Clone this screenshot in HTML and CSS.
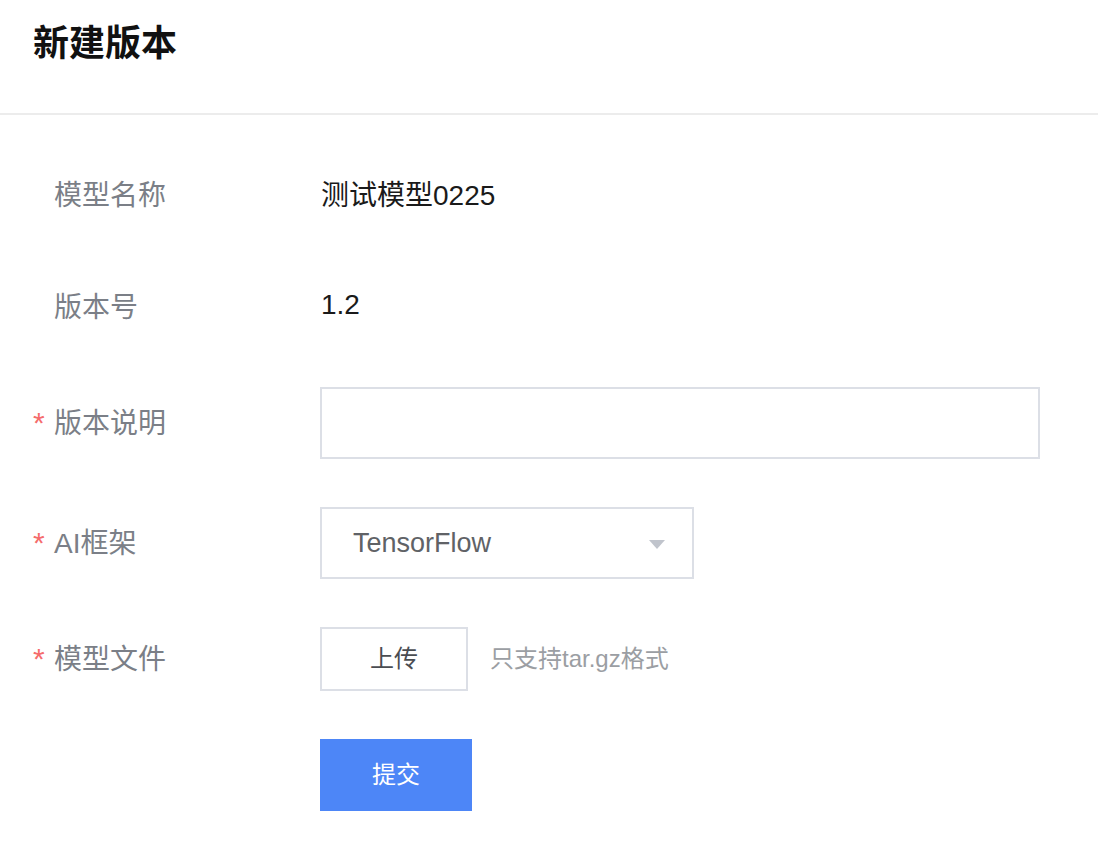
FILE: index.html
```html
<!DOCTYPE html>
<html lang="zh-CN">
<head>
<meta charset="utf-8">
<title>新建版本</title>
<link rel="stylesheet" href="styles.css">
</head>
<body>
<header class="page-header">
  <h1 class="page-title">新建版本</h1>
</header>
<form class="form">
  <div class="row row-text">
    <div class="label">模型名称</div>
    <div class="value">测试模型0225</div>
  </div>
  <div class="row row-text">
    <div class="label">版本号</div>
    <div class="value">1.2</div>
  </div>
  <div class="row">
    <div class="label required"><span class="star">*</span>版本说明</div>
    <div class="field"><div class="input"></div></div>
  </div>
  <div class="row">
    <div class="label required"><span class="star">*</span>AI框架</div>
    <div class="field">
      <div class="select">
        <span class="select-text">TensorFlow</span>
        <span class="arrow"></span>
      </div>
    </div>
  </div>
  <div class="row row-upload">
    <div class="label required"><span class="star">*</span>模型文件</div>
    <div class="field upload-field">
      <div class="btn-upload">上传</div>
      <span class="hint">只支持tar.gz格式</span>
    </div>
  </div>
  <div class="row row-submit">
    <div class="label"></div>
    <div class="field"><div class="btn-submit">提交</div></div>
  </div>
</form>
</body>
</html>
```
FILE: styles.css
```css
* { box-sizing: border-box; }
body {
  margin: 0;
  background: #fff;
  font-family: "Liberation Sans", "Noto Sans CJK SC", sans-serif;
  width: 1098px;
}
.page-header {
  height: 115px;
  border-bottom: 2px solid #ececec;
  padding: 21px 0 0 33px;
}
.page-title {
  margin: 0;
  font-size: 36px;
  line-height: 46px;
  font-weight: bold;
  color: #111;
}
.form {
  padding: 48px 0 0 33px;
  display: flex;
  flex-direction: column;
  gap: 48px;
}
.row {
  display: flex;
  align-items: center;
  height: 72px;
}
.row-text { height: 64px; }
.row-upload { height: 64px; }
.row-submit { height: 72px; }
.label {
  width: 287px;
  flex: none;
  padding-left: 21px;
  padding-bottom: 5px;
  font-size: 28px;
  color: #7b7f87;
  display: flex;
  align-items: center;
}
.label.required { padding-left: 0; }
.star {
  color: #f56c6c;
  width: 21px;
  font-size: 30px;
  line-height: 1;
  padding-top: 4px;
}
.value {
  font-size: 28px;
  color: #1a1a1a;
  padding-left: 1px;
  padding-bottom: 4px;
}
.field { display: flex; align-items: center; height: 100%; }
.input {
  width: 720px;
  height: 72px;
  border: 2px solid #dcdfe6;
  background: #fff;
}
.select {
  width: 374px;
  height: 72px;
  border: 2px solid #dcdfe6;
  display: flex;
  align-items: center;
  justify-content: space-between;
  padding: 0 27px 0 31px;
}
.select-text {
  font-size: 27px;
  color: #606266;
}
.arrow {
  width: 0;
  height: 0;
  border-left: 8px solid transparent;
  border-right: 8px solid transparent;
  border-top: 9px solid #c0c4cc;
  margin-top: 2px;
}
.upload-field { gap: 22px; }
.btn-upload {
  width: 148px;
  height: 64px;
  border: 2px solid #dcdfe6;
  display: flex;
  align-items: center;
  justify-content: center;
  padding-bottom: 5px;
  font-size: 24px;
  color: #4a4d52;
}
.hint {
  font-size: 24px;
  color: #9b9ea3;
  padding-bottom: 5px;
}
.btn-submit {
  width: 152px;
  height: 72px;
  background: #4d86f7;
  color: #fff;
  font-size: 24px;
  padding-bottom: 5px;
  display: flex;
  align-items: center;
  justify-content: center;
}
```
